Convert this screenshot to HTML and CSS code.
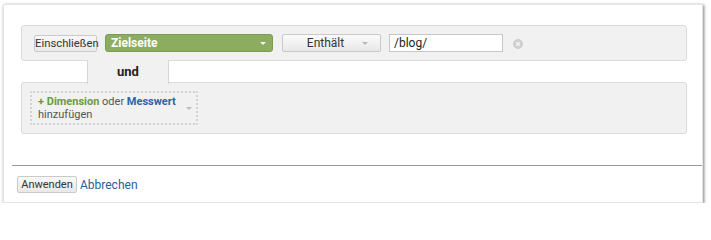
FILE: index.html
```html
<!DOCTYPE html>
<html lang="de">
<head>
<meta charset="utf-8">
<link rel="stylesheet" href="styles.css">
</head>
<body>
<div class="card">
  <div class="filters">
    <div class="box box-first">
      <button class="btn btn-include">Einschließen</button>
      <div class="select-green"><span>Zielseite</span><span class="caret caret-white"></span></div>
      <div class="select-grey"><span class="sel-text">Enthält</span><span class="caret caret-grey"></span></div>
      <div class="text-input">/blog/</div>
      <span class="remove"><svg width="10" height="10" viewBox="0 0 10 10"><circle cx="5" cy="5" r="5" fill="#cfcfcf"/><path d="M3.2 3.2L6.8 6.8M6.8 3.2L3.2 6.8" stroke="#f4f4f4" stroke-width="1.4"/></svg></span>
    </div>
    <div class="und-row"><div class="und-tab">und</div></div>
    <div class="box box-second">
      <div class="add-dim">
        <div class="add-text"><div class="line1"><span class="green">+ Dimension</span> oder <span class="blue">Messwert</span></div><div>hinzufügen</div></div>
        <span class="caret caret-light"></span>
      </div>
    </div>
  </div>
  <div class="divider"></div>
  <div class="footer">
    <button class="btn btn-apply">Anwenden</button>
    <a class="cancel" href="#">Abbrechen</a>
  </div>
</div>
</body>
</html>
```

FILE: styles.css
```css
* { box-sizing: border-box; }
html, body { margin: 0; padding: 0; background: #fff; }
body { font-family: Roboto, "Liberation Sans", Arial, sans-serif; color: #333; }

.card {
  margin: 4px 0 0 3px;
  width: 700px;
  height: 199px;
  border: 1px solid #e4e4e4;
  background: #fff;
  box-shadow: 1px 1px 3px rgba(0,0,0,0.5);
}

.filters { padding: 20px 15px 0 17px; }

.box {
  background: #f1f1f1;
  border: 1px solid #dadada;
  border-radius: 3px;
}
.box-first {
  height: 36px;
  display: flex;
  align-items: center;
  padding: 0 0 0 12px;
}

.btn {
  font-family: Roboto, "Liberation Sans", Arial, sans-serif;
  font-size: 11px;
  color: #333;
  background: linear-gradient(#f8f8f8, #e9e9e9);
  border: 1px solid #cacaca;
  border-radius: 2px;
  padding: 0;
  height: 17px;
  line-height: 15px;
  margin: 0;
}
.btn-include { width: 63px; margin-top: 1px; font-size: 11.3px; }

.select-green {
  margin-left: 8px;
  width: 168px;
  height: 18px;
  background: #8cac60;
  border: 1px solid #7d9c53;
  border-radius: 3px;
  color: #fff;
  font-weight: bold;
  font-size: 12px;
  display: flex;
  align-items: center;
  justify-content: space-between;
  padding: 0 6px 0 5px;
}

.caret {
  width: 0; height: 0;
  border-left: 3px solid transparent;
  border-right: 3px solid transparent;
  border-top: 3px solid #fff;
}
.caret-white { border-top-color: #f4f4f4; }
.caret-grey { border-top-color: #b8b8b8; }
.caret-light { border-top-color: #bdbdbd; }

.select-grey {
  margin-left: 9px;
  width: 99px;
  height: 18px;
  background: linear-gradient(#fbfbfb, #e8e8e8);
  border: 1px solid #c9c9c9;
  border-radius: 2px;
  display: flex;
  align-items: center;
  padding: 0 12px 0 0;
  font-size: 12px;
  color: #333;
}
.sel-text { flex: 1; text-align: center; padding-left: 6px; }

.text-input {
  margin-left: 8px;
  width: 114px;
  height: 18px;
  background: #fff;
  border: 1px solid #c6c6c6;
  font-size: 12px;
  line-height: 16px;
  padding-left: 4px;
  color: #222;
}

.remove { margin-left: 10px; display: flex; margin-top: 1px; }

.und-row { height: 22px; }
.und-tab {
  margin: -1px 0 0 66px;
  width: 82px;
  height: 24px;
  background: #f1f1f1;
  border-left: 1px solid #d6d6d6;
  border-right: 1px solid #d6d6d6;
  position: relative;
  z-index: 1;
  font-size: 13px;
  font-weight: bold;
  color: #222;
  text-align: center;
  line-height: 23px;
}

.box-second {
  height: 52px;
  padding: 8px 0 0 8px;
}
.add-dim {
  width: 168px;
  height: 34px;
  border: 2px dotted #d2d2d2;
  border-radius: 2px;
  display: flex;
  align-items: center;
  justify-content: space-between;
  padding: 0 4px 0 6px;
}
.add-text {
  font-size: 11px;
  line-height: 13px;
  color: #555;
}
.line1 { white-space: nowrap; }
.green { color: #6b9a3c; font-weight: bold; }
.blue { color: #2b63a8; font-weight: bold; }

.divider {
  margin: 31px 0 0 8px;
  height: 1px;
  background: #9a9a9a;
}

.footer {
  padding: 10px 0 0 13px;
  display: flex;
  align-items: center;
}
.btn-apply { width: 60px; font-size: 11px; }
.cancel {
  margin-left: 3px;
  font-size: 12px;
  color: #1f5f9c;
  text-decoration: none;
}
```
